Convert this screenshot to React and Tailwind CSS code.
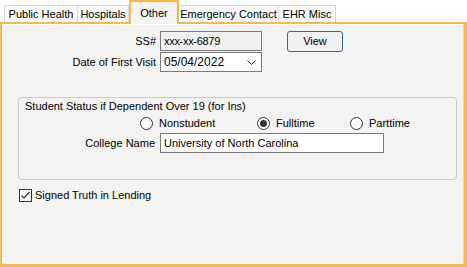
import React from 'react';

const tabs = [
  { label: 'Public Health', width: 74 },
  { label: 'Hospitals', width: 52 },
  { label: 'Other', width: 50, active: true },
  { label: 'Emergency Contact', width: 101 },
  { label: 'EHR Misc', width: 58 },
];

const Radio = ({ checked, label, className }) => (
  <div className={`flex items-center gap-[6px] ${className}`}>
    <div className="w-[13px] h-[13px] rounded-full border border-[#333] bg-white flex items-center justify-center">
      {checked && <div className="w-[7px] h-[7px] rounded-full bg-[#333]" />}
    </div>
    <span>{label}</span>
  </div>
);

const App = () => {
  return (
    <div
      className="w-[467px] h-[267px] bg-white flex flex-col text-[11px] text-black leading-[13px]"
      style={{ fontFamily: '"Liberation Sans", Arial, sans-serif' }}
    >
      {/* Tab strip */}
      <div className="flex items-end h-[22px] pl-[4px]">
        {tabs.map((tab) =>
          tab.active ? (
            <div
              key={tab.label}
              className="relative z-10 -mb-[2px] h-[24px] border-2 border-b-0 border-[#F8B84E] bg-[#F3F4F1] flex items-start justify-center pt-[5px]"
              style={{ width: tab.width }}
            >
              {tab.label}
            </div>
          ) : (
            <div
              key={tab.label}
              className="h-[17px] border border-b-0 border-[#D9D9D9] -ml-px first:ml-0 bg-[#FAFAFA] flex items-center justify-center pt-[1px]"
              style={{ width: tab.width }}
            >
              {tab.label}
            </div>
          )
        )}
      </div>

      {/* Orange frame */}
      <div className="flex-1 border-2 border-r-[3px] border-b-[3px] border-[#F8B84E] flex">
        <div className="flex-1 border border-white border-r-[#D8D8D8] border-b-white bg-[#F3F4F1] flex flex-col">
          {/* SS# row */}
          <div className="flex items-center mt-[6px] h-[20px]">
            <div className="w-[154px] text-right pr-[1px]">SS#</div>
            <div className="ml-[3px] w-[102px] h-[20px] border border-[#7A7A7A] bg-[#F0F0F0] flex items-center pl-[3px] tracking-[-0.3px]">
              xxx-xx-6879
            </div>
            <button className="ml-[25px] w-[56px] h-[21px] rounded-[3px] border border-[#2D6A97] bg-[#F1F1F1] flex items-center justify-center">
              View
            </button>
          </div>

          {/* Date row */}
          <div className="flex items-center mt-[1px] h-[20px]">
            <div className="w-[154px] text-right pr-[1px]">Date of First Visit</div>
            <div className="ml-[3px] w-[102px] h-[20px] border border-[#7A7A7A] bg-white flex items-center justify-between pl-[3px] pr-[5px]">
              <span className="text-[12px]">05/04/2022</span>
              <svg width="9" height="5" viewBox="0 0 9 5" fill="none">
                <path d="M0.5 0.5 L4.5 4.5 L8.5 0.5" stroke="#333" strokeWidth="1" />
              </svg>
            </div>
          </div>

          {/* Group box */}
          <div className="ml-[15px] mt-[25px] w-[439px] h-[83px] border border-[#C9C9C9] rounded-[4px] flex flex-col">
            <div className="pl-[6px] pt-[2px]">Student Status if Dependent Over 19 (for Ins)</div>
            <div className="flex items-center mt-[3px] h-[14px] pl-[121px]">
              <Radio label="Nonstudent" className="w-[117px]" />
              <Radio label="Fulltime" checked className="w-[93px]" />
              <Radio label="Parttime" />
            </div>
            <div className="flex items-center mt-[3px]">
              <div className="w-[136px] text-right">College Name</div>
              <div className="ml-[5px] w-[224px] h-[20px] border border-[#7A7A7A] bg-white flex items-center pl-[3px]">
                University of North Carolina
              </div>
            </div>
          </div>

          {/* Checkbox */}
          <div className="flex items-center ml-[16px] mt-[9px] gap-[3px]">
            <div className="w-[13px] h-[13px] border border-[#333] bg-white flex items-center justify-center">
              <svg width="11" height="11" viewBox="0 0 11 11" fill="none">
                <path d="M1.5 5.5 L4 8 L9.5 2" stroke="#333" strokeWidth="1.2" />
              </svg>
            </div>
            <span>Signed Truth in Lending</span>
          </div>
        </div>
      </div>
    </div>
  );
};

export default App;
